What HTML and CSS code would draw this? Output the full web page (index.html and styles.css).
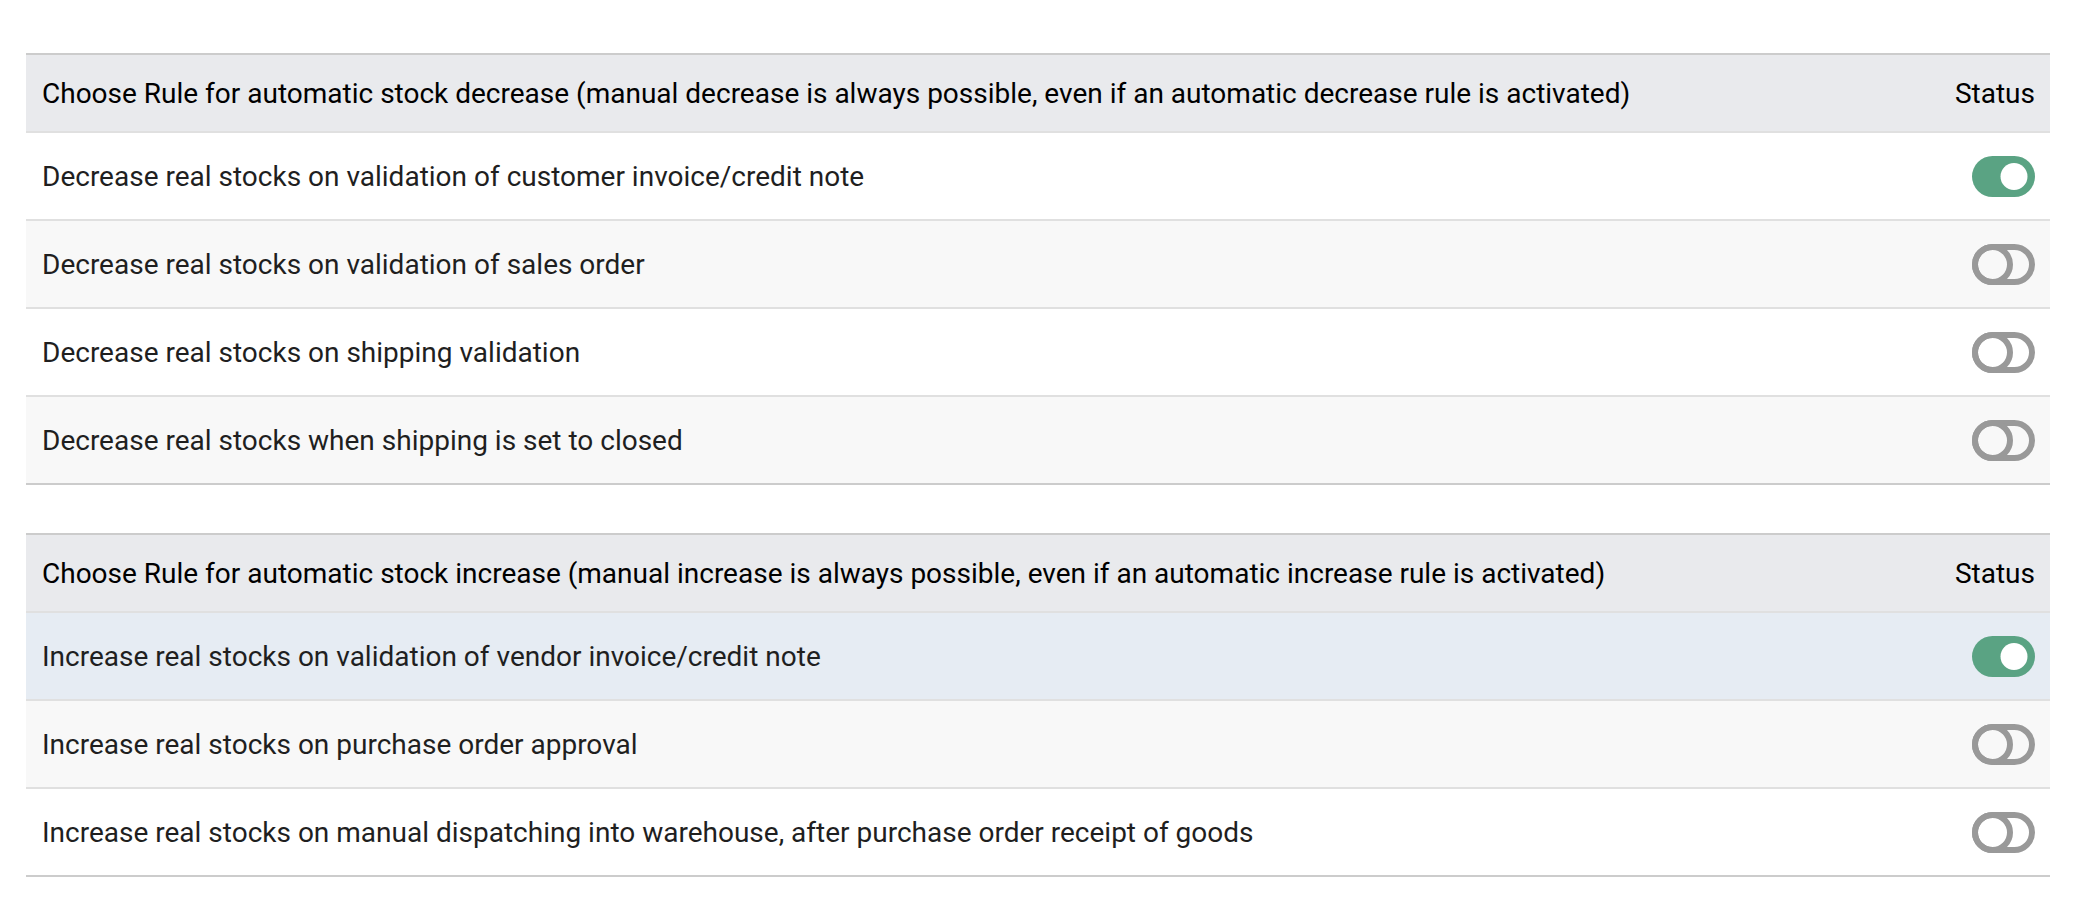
FILE: index.html
```html
<!DOCTYPE html>
<html>
<head>
<meta charset="utf-8">
<link rel="stylesheet" href="styles.css">
</head>
<body>
<div class="page">
  <div class="rules">
    <div class="row head">
      <div class="label">Choose Rule for automatic stock decrease (manual decrease is always possible, even if an automatic decrease rule is activated)</div>
      <div class="status">Status</div>
    </div>
    <div class="row odd">
      <div class="label">Decrease real stocks on validation of customer invoice/credit note</div>
      <div class="status"><svg class="tog" viewBox="0 0 63 41"><rect class="on-bg" x="0" y="0" width="63" height="41" rx="20.5"/><circle class="on-knob" cx="42" cy="20.5" r="13.5"/></svg></div>
    </div>
    <div class="row even">
      <div class="label">Decrease real stocks on validation of sales order</div>
      <div class="status"><svg class="tog" viewBox="0 0 63 41"><rect class="off" x="3" y="3" width="57" height="35" rx="17.5"/><circle class="off" cx="20.5" cy="20.5" r="17.5"/></svg></div>
    </div>
    <div class="row odd">
      <div class="label">Decrease real stocks on shipping validation</div>
      <div class="status"><svg class="tog" viewBox="0 0 63 41"><rect class="off" x="3" y="3" width="57" height="35" rx="17.5"/><circle class="off" cx="20.5" cy="20.5" r="17.5"/></svg></div>
    </div>
    <div class="row even">
      <div class="label">Decrease real stocks when shipping is set to closed</div>
      <div class="status"><svg class="tog" viewBox="0 0 63 41"><rect class="off" x="3" y="3" width="57" height="35" rx="17.5"/><circle class="off" cx="20.5" cy="20.5" r="17.5"/></svg></div>
    </div>
  </div>

  <div class="rules">
    <div class="row head">
      <div class="label">Choose Rule for automatic stock increase (manual increase is always possible, even if an automatic increase rule is activated)</div>
      <div class="status">Status</div>
    </div>
    <div class="row hover">
      <div class="label">Increase real stocks on validation of vendor invoice/credit note</div>
      <div class="status"><svg class="tog" viewBox="0 0 63 41"><rect class="on-bg" x="0" y="0" width="63" height="41" rx="20.5"/><circle class="on-knob" cx="42" cy="20.5" r="13.5"/></svg></div>
    </div>
    <div class="row even">
      <div class="label">Increase real stocks on purchase order approval</div>
      <div class="status"><svg class="tog" viewBox="0 0 63 41"><rect class="off" x="3" y="3" width="57" height="35" rx="17.5"/><circle class="off" cx="20.5" cy="20.5" r="17.5"/></svg></div>
    </div>
    <div class="row odd">
      <div class="label">Increase real stocks on manual dispatching into warehouse, after purchase order receipt of goods</div>
      <div class="status"><svg class="tog" viewBox="0 0 63 41"><rect class="off" x="3" y="3" width="57" height="35" rx="17.5"/><circle class="off" cx="20.5" cy="20.5" r="17.5"/></svg></div>
    </div>
  </div>
</div>
</body>
</html>
```

FILE: styles.css
```css
html, body {
  margin: 0;
  padding: 0;
  background: #ffffff;
}

.page {
  padding: 53px 24px 0 26px;
  display: flex;
  flex-direction: column;
  gap: 48px;
  font-family: Roboto, "Liberation Sans", sans-serif;
  font-size: 28px;
}

.rules {
  display: flex;
  flex-direction: column;
  border-top: 2px solid #cccccc;
  border-bottom: 2px solid #cccccc;
}

.row {
  display: flex;
  align-items: center;
  justify-content: space-between;
  padding: 0 15px 0 16px;
  height: 86px;
  color: #1f1f1f;
}

.row + .row {
  border-top: 2px solid #e0e0e0;
}

.row.head {
  height: 76px;
  background: #e9eaed;
  color: #000000;
}

.row.odd { background: #ffffff; }
.row.even { background: #f8f8f8; }
.row.hover { background: #e6ecf3; }

.status {
  display: flex;
  align-items: center;
}

.tog {
  width: 63px;
  height: 41px;
  display: block;
}

.on-bg { fill: #5aa383; }
.on-knob { fill: #ffffff; }
.off {
  fill: none;
  stroke: #999999;
  stroke-width: 6;
}
```
